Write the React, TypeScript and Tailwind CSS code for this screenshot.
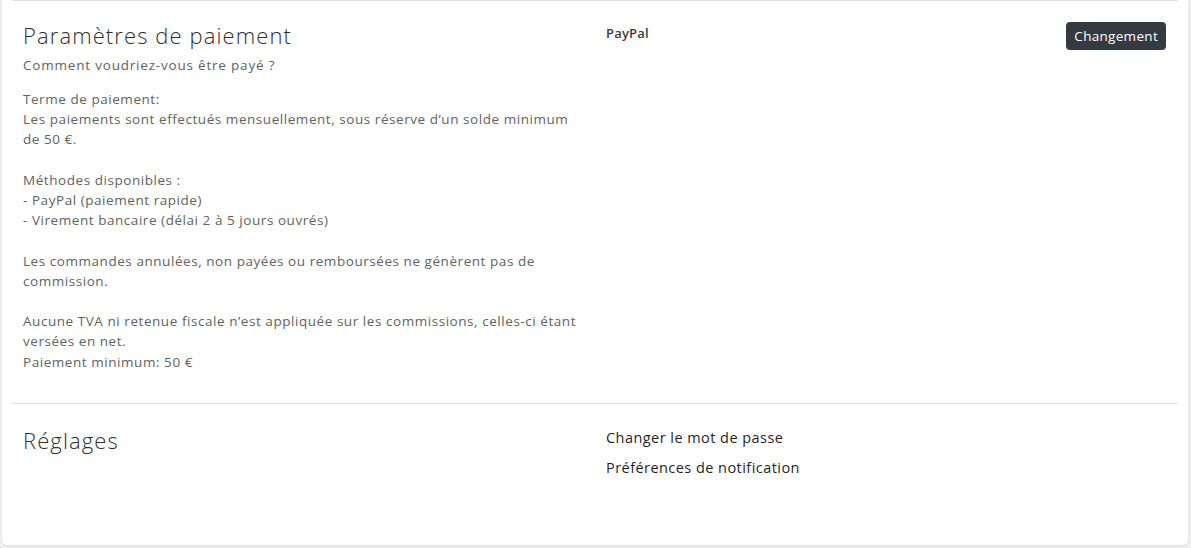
import React from 'react';

const font = { fontFamily: '"Open Sans", "Liberation Sans", sans-serif' };

const payoutLines: string[][] = [
  [
    'Terme de paiement:',
    'Les paiements sont effectués mensuellement, sous réserve d’un solde minimum',
    'de 50 €.',
  ],
  [
    'Méthodes disponibles :',
    '- PayPal (paiement rapide)',
    '- Virement bancaire (délai 2 à 5 jours ouvrés)',
  ],
  [
    'Les commandes annulées, non payées ou remboursées ne génèrent pas de',
    'commission.',
  ],
  [
    'Aucune TVA ni retenue fiscale n’est appliquée sur les commissions, celles-ci étant',
    'versées en net.',
    'Paiement minimum: 50 €',
  ],
];

export default function App() {
  return (
    <div
      className="min-h-screen bg-[#efefef] pl-[2px] pr-[3px] pb-[3px] antialiased"
      style={font}
    >
      <div className="h-[545px] rounded-b-[5px] bg-white px-[10px] shadow-[0_1px_2px_rgba(0,0,0,0.08)]">
        <section className="grid grid-cols-2 border-y border-[#e2e2e2] pt-[21px] pb-[31px]">
          <div className="px-[11px]">
            <h2 className="text-[22px] leading-[27px] font-light tracking-[1.1px] text-[#2f2f2f]">
              Paramètres de paiement
            </h2>
            <p className="mt-[6px] text-[13.5px] leading-[20px] tracking-[0.8px] text-[#626262]">
              Comment voudriez-vous être payé ?
            </p>
            <div className="mt-[14px] space-y-[20.2px] text-[13.5px] leading-[20.2px] tracking-[0.55px] text-[#626262]">
              {payoutLines.map((block, i) => (
                <p key={i}>
                  {block.map((line, j) => (
                    <span key={j} className="block whitespace-nowrap">
                      {line}
                    </span>
                  ))}
                </p>
              ))}
            </div>
          </div>
          <div className="flex items-start justify-between pl-[11px] pr-[12px]">
            <span className="mt-[1px] text-[13px] leading-[20px] font-semibold tracking-[0.2px] text-[#3a3a3a]">
              PayPal
            </span>
            <button
              type="button"
              className="h-[28px] rounded-[4px] bg-[#343a40] px-[8px] text-[13.5px] font-medium tracking-[0.3px] text-white"
            >
              Changement
            </button>
          </div>
        </section>

        <section className="grid grid-cols-2 pt-[23px]">
          <div className="px-[11px]">
            <h2 className="text-[22px] leading-[27px] font-light tracking-[1.1px] text-[#2f2f2f]">
              Réglages
            </h2>
          </div>
          <div className="flex flex-col gap-[9px] px-[11px] text-[14.5px] leading-[21px] tracking-[0.45px] text-[#1f1f1f]">
            <a href="#">Changer le mot de passe</a>
            <a href="#">Préférences de notification</a>
          </div>
        </section>
      </div>
    </div>
  );
}
